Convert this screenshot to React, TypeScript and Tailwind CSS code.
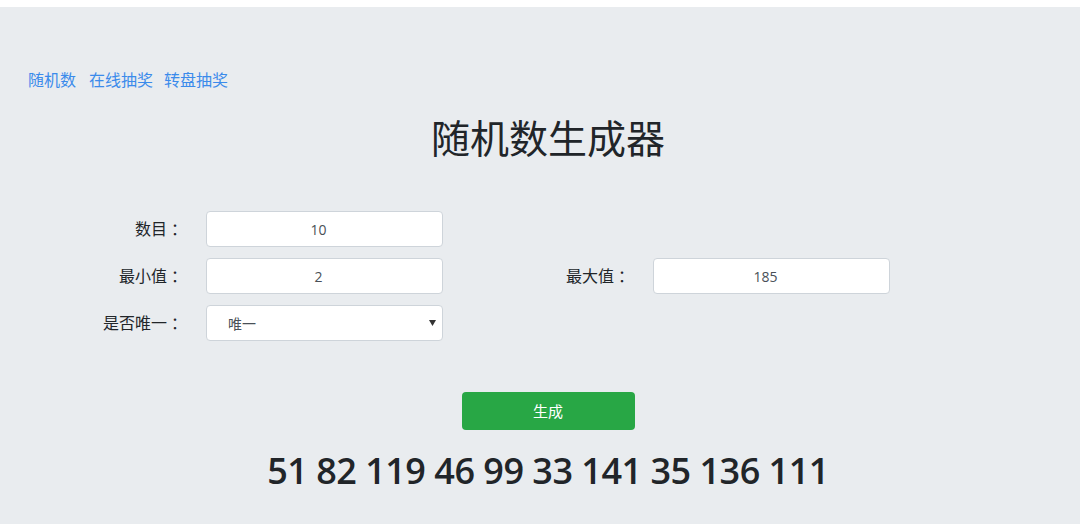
import React from 'react';

const font = { fontFamily: '"Open Sans", "Noto Sans CJK SC", sans-serif' };
const colonFont = { fontFamily: '"Noto Sans CJK JP", sans-serif' };

const Field = ({ value }: { value: string }) => (
  <input
    readOnly
    value={value}
    className="h-[36px] w-[237px] rounded-[4px] border border-[#ced4da] bg-white pr-[12px] text-center text-[14px] text-[#495057] outline-none"
  />
);

const Label = ({ text }: { text: string }) => (
  <label className="flex h-[36px] items-center justify-end text-[16px] text-[#212529]">
    {text}
    <span style={colonFont}>：</span>
  </label>
);

export default function App() {
  const numbers = [51, 82, 119, 46, 99, 33, 141, 35, 136, 111];

  return (
    <div className="min-h-[524px] w-full bg-[#e9ecef]" style={font}>
      <div className="h-[7px] bg-white" />
      <div className="pl-[16px]">
        {/* nav */}
        <nav className="mt-[61px] flex h-[24px] items-center px-3 text-[16px] leading-[24px] text-[#3b8beb]">
          <a className="mr-[13px]">随机数</a>
          <a className="mr-[11px]">在线抽奖</a>
          <a>转盘抽奖</a>
        </nav>

        <h1 className="mt-[22px] text-center text-[39px] leading-[48px] font-normal text-[#212529]">随机数生成器</h1>

        <div className="mt-[49px] grid grid-cols-[167px_237px_164px_237px] gap-x-[23px] gap-y-[11px]">
          <Label text="数目" />
          <Field value="10" />
          <div />
          <div />

          <Label text="最小值" />
          <Field value="2" />
          <Label text="最大值" />
          <Field value="185" />

          <Label text="是否唯一" />
          <div className="relative h-[36px] w-[237px]">
            <select
              defaultValue="1"
              className="h-full w-full appearance-none rounded-[4px] border border-[#ced4da] bg-white pl-[21px] text-[14px] text-[#495057] outline-none"
            >
              <option value="1">唯一</option>
              <option value="0">不唯一</option>
            </select>
            <svg className="pointer-events-none absolute right-[7px] top-[15px]" width="7" height="6" viewBox="0 0 7 6">
              <path d="M0 0 H7 L3.5 6 Z" fill="#333" />
            </svg>
          </div>
          <div />
          <div />
        </div>

        <div className="mt-[51px] flex justify-center">
          <button className="h-[38px] w-[173px] rounded-[4px] bg-[#28a745] text-[15px] text-white">生成</button>
        </div>

        <div className="mt-[19px] text-center text-[36px] leading-[44px] font-semibold tracking-[-0.5px] text-[#212529]">
          {numbers.join(' ')}
        </div>
      </div>
    </div>
  );
}
